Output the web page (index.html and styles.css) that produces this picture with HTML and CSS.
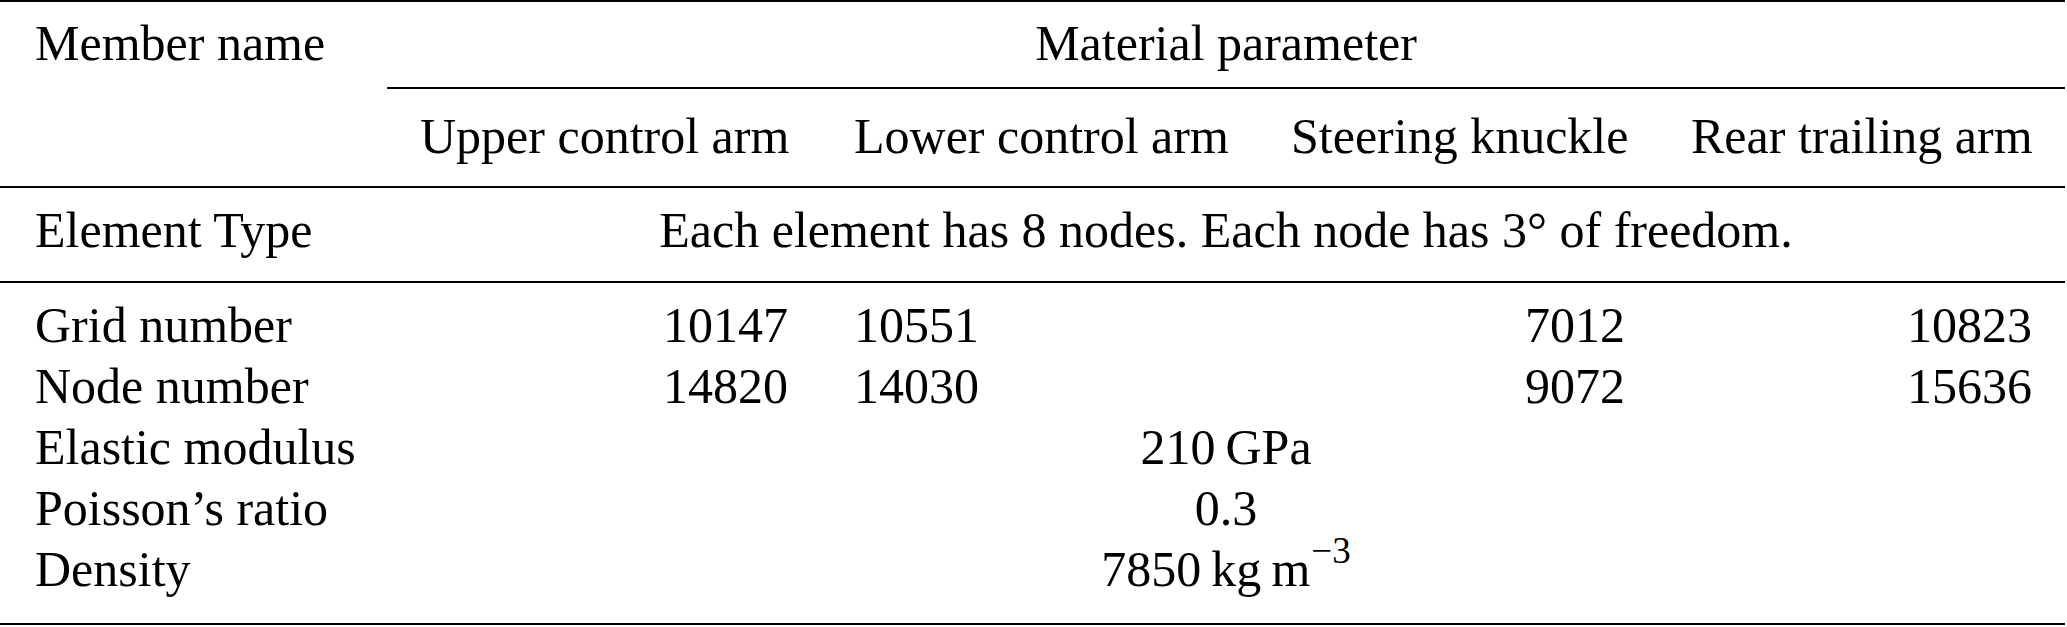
FILE: index.html
```html
<!doctype html>
<html>

<head>
  <meta name="viewport" content="width=device-width, initial-scale=1.0">
  <title>Material parameters</title>
  <link rel="stylesheet" href="styles.css">
</head>

<body>

  <table class="params">
    <colgroup>
      <col class="col-name">
      <col class="col-upper">
      <col class="col-lower">
      <col class="col-knuckle">
      <col class="col-trailing">
    </colgroup>
    <thead>
      <tr class="row-group">
        <td class="name" rowspan="2">Member name</td>
        <td class="center cmid" colspan="4">Material parameter</td>
      </tr>
      <tr class="row-members">
        <td class="right">Upper control arm</td>
        <td>Lower control arm</td>
        <td class="right">Steering knuckle</td>
        <td class="right">Rear trailing arm</td>
      </tr>
    </thead>
    <tbody class="type">
      <tr>
        <td class="name">Element Type</td>
        <td class="center" colspan="4">Each element has 8 nodes. Each node has 3° of freedom.</td>
      </tr>
    </tbody>
    <tbody class="values">
      <tr class="first">
        <td class="name">Grid number</td>
        <td class="right">10147</td>
        <td>10551</td>
        <td class="right">7012</td>
        <td class="right">10823</td>
      </tr>
      <tr>
        <td class="name">Node number</td>
        <td class="right">14820</td>
        <td>14030</td>
        <td class="right">9072</td>
        <td class="right">15636</td>
      </tr>
      <tr>
        <td class="name">Elastic modulus</td>
        <td class="center" colspan="4">210&thinsp;GPa</td>
      </tr>
      <tr>
        <td class="name">Poisson’s ratio</td>
        <td class="center" colspan="4">0.3</td>
      </tr>
      <tr class="last">
        <td class="name">Density</td>
        <td class="center" colspan="4">7850&thinsp;kg&thinsp;m<sup>−3</sup></td>
      </tr>
    </tbody>
  </table>

</body>

</html>
```

FILE: styles.css
```css
* {
  margin: 0;
  padding: 0;
  box-sizing: border-box;
}

body {
  font: 50px "Liberation Serif", "Times New Roman", serif;
  color: #000;
  background: #fff;
}

.params {
  width: 2065px;
  table-layout: fixed;
  border-collapse: separate;
  border-spacing: 0;
  border-top: 2px solid #000;
  border-bottom: 2px solid #000;
}

.col-name {
  width: 387px;
}

.col-upper {
  width: 434px;
}

.col-lower {
  width: 437px;
}

.col-knuckle {
  width: 400px;
}

.col-trailing {
  width: 407px;
}

.params td {
  line-height: 61px;
  padding: 0 33px;
  text-align: left;
  vertical-align: top;
  white-space: nowrap;
}

.params td.name {
  padding-left: 35px;
}

.params td.right {
  text-align: right;
}

.params td.center {
  text-align: center;
}

/* header rows */
.row-group td {
  padding-top: 11px;
  padding-bottom: 13px;
}

.row-group td.name {
  border-bottom: 2px solid #000;
}

.cmid {
  border-bottom: 2px solid #000;
}

.row-members td {
  padding-top: 17px;
  padding-bottom: 19px;
  border-bottom: 2px solid #000;
}

/* element type row */
.type td {
  padding-top: 12px;
  padding-bottom: 20px;
  border-bottom: 2px solid #000;
}

/* numbers */
.values tr.first td {
  padding-top: 12px;
}

.values tr.last td {
  padding-bottom: 23px;
}

sup {
  font-size: 74%;
  line-height: 0;
  vertical-align: 0.62em;
  margin-left: 1px;
}
```
